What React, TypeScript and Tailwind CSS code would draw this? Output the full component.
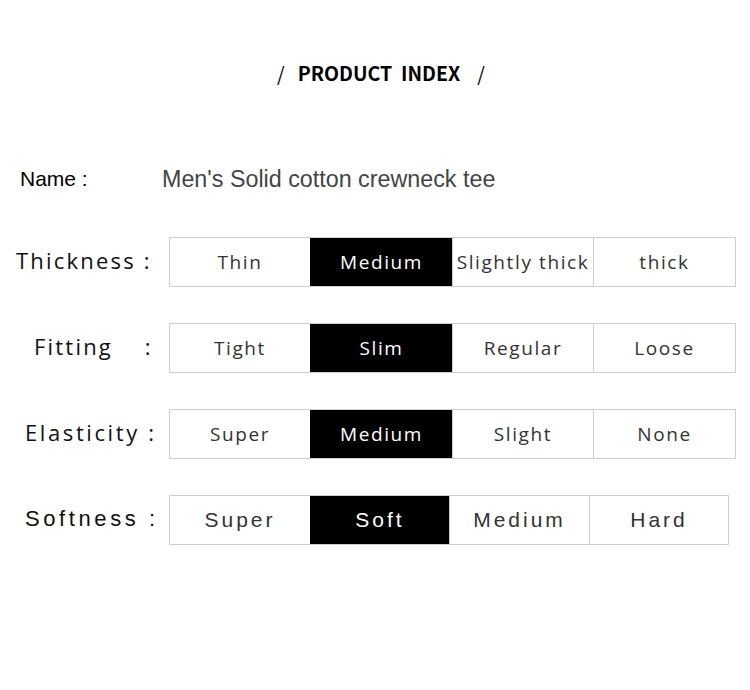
import React from "react";

type Row = {
  label: string;
  labelClass: string;
  font: string;
  cellText: string;
  widthClass: string;
  cells: { text: string; w: string }[];
  active: number;
};

const segoe = "font-['Open_Sans',sans-serif]";
const helv = "font-['Liberation_Sans',Arial,sans-serif]";

const rows: Row[] = [
  {
    label: "Thickness :",
    labelClass: "pl-[16px] text-[22px] tracking-[2.2px]",
    font: segoe,
    cellText: "text-[19px] tracking-[1.6px]",
    widthClass: "w-[567px]",
    cells: [
      { text: "Thin", w: "w-[140px]" },
      { text: "Medium", w: "w-[142px]" },
      { text: "Slightly thick", w: "w-[141px]" },
      { text: "thick", w: "w-[142px]" },
    ],
    active: 1,
  },
  {
    label: "Fitting    :",
    labelClass: "pl-[34px] text-[22px] tracking-[2.2px]",
    font: segoe,
    cellText: "text-[19px] tracking-[1.6px]",
    widthClass: "w-[567px]",
    cells: [
      { text: "Tight", w: "w-[140px]" },
      { text: "Slim", w: "w-[142px]" },
      { text: "Regular", w: "w-[141px]" },
      { text: "Loose", w: "w-[142px]" },
    ],
    active: 1,
  },
  {
    label: "Elasticity :",
    labelClass: "pl-[25px] text-[22px] tracking-[2.6px]",
    font: segoe,
    cellText: "text-[19px] tracking-[1.6px]",
    widthClass: "w-[567px]",
    cells: [
      { text: "Super", w: "w-[140px]" },
      { text: "Medium", w: "w-[142px]" },
      { text: "Slight", w: "w-[141px]" },
      { text: "None", w: "w-[142px]" },
    ],
    active: 1,
  },
  {
    label: "Softness :",
    labelClass: "pl-[25px] text-[22px] tracking-[3.6px]",
    font: helv,
    cellText: "text-[21px] tracking-[3px]",
    widthClass: "w-[560px]",
    cells: [
      { text: "Super", w: "w-[140px]" },
      { text: "Soft", w: "w-[139px]" },
      { text: "Medium", w: "w-[140px]" },
      { text: "Hard", w: "w-[139px]" },
    ],
    active: 1,
  },
];

export default function App() {
  return (
    <div className="w-[750px] h-[690px] bg-white text-[#111] overflow-hidden">
      <div className="pt-[60px] flex justify-center">
        <div className="flex items-center h-[26px] font-['Noto_Sans_CJK_KR','Noto_Sans',sans-serif] text-[19.5px] font-bold text-black pl-[12px]">
          <span className="font-normal">/</span>
          <span className="ml-[13px]">PRODUCT&nbsp;&nbsp;INDEX</span>
          <span className="ml-[17px] font-normal">/</span>
        </div>
      </div>

      <div className="mt-[81px] flex items-center h-[24px]">
        <div className={`${helv} w-[162px] pl-[20px] text-[21px] text-black`}>Name :</div>
        <div className={`${helv} text-[23.3px] text-[#444]`}>Men's Solid cotton crewneck tee</div>
      </div>

      <div className="mt-[46px] flex flex-col gap-[36px]">
        {rows.map((r) => (
          <div key={r.label} className="flex items-center h-[50px]">
            <div className={`${r.font} ${r.labelClass} w-[169px] whitespace-pre text-[#111] -mt-[4px]`}>
              {r.label}
            </div>
            <div className={`${r.widthClass} h-[50px] flex border border-[#cfcfcf]`}>
              {r.cells.map((c, i) => (
                <div
                  key={c.text}
                  className={`${c.w} shrink-0 ${i > 0 ? "border-l border-[#cfcfcf]" : ""} ${
                    i === r.active ? "bg-black text-white border-l-black" : "text-[#333]"
                  } flex items-center justify-center ${r.font} ${r.cellText} whitespace-nowrap`}
                >
                  {c.text}
                </div>
              ))}
            </div>
          </div>
        ))}
      </div>
    </div>
  );
}
